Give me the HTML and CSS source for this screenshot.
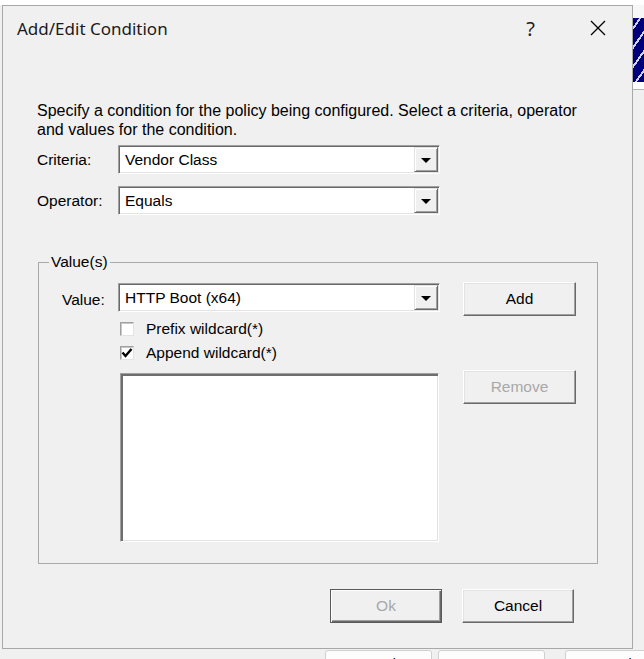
FILE: index.html
```html
<!DOCTYPE html>
<html lang="en">
<head>
<meta charset="utf-8">
<title>Add/Edit Condition</title>
<link rel="stylesheet" href="styles.css">
</head>
<body>
<div class="desktop">
  <div class="top-strip"></div>
  <div class="bg-side">
    <div class="bg-side-white"></div>
    <div class="bg-art"></div>
    <div class="bg-side-white2"></div>
    <div class="bg-side-line"></div>
  </div>
  <div class="bg-wizard">
    <span class="wiz-btn wiz-back">&lt; Back</span>
    <span class="wiz-btn wiz-next">Next &gt;</span>
    <span class="wiz-btn wiz-cancel">Cancel</span>
  </div>

  <div class="dialog">
    <div class="titlebar">
      <span class="title">Add/Edit Condition</span>
      <span class="tb-help">?</span>
      <span class="tb-close">
        <svg width="16" height="16" viewBox="0 0 16 16"><path d="M1 1 L15 15 M15 1 L1 15" stroke="#000" stroke-width="1.3" fill="none"/></svg>
      </span>
    </div>

    <div class="content">
      <p class="desc">Specify a condition for the policy being configured. Select a criteria, operator and values for the condition.</p>

      <div class="field-row first">
        <label class="lbl">Criteria:</label>
        <div class="combo"><span class="combo-text">Vendor Class</span><span class="combo-btn"><i class="arrow"></i></span></div>
      </div>
      <div class="field-row">
        <label class="lbl">Operator:</label>
        <div class="combo"><span class="combo-text">Equals</span><span class="combo-btn"><i class="arrow"></i></span></div>
      </div>

      <fieldset class="group">
        <legend class="group-legend">Value(s)</legend>
        <div class="group-grid">
          <label class="lbl-value">Value:</label>
          <div class="combo"><span class="combo-text">HTTP Boot (x64)</span><span class="combo-btn"><i class="arrow"></i></span></div>
          <button class="btn btn-add">Add</button>

          <div class="left-col">
            <div class="check-row">
              <span class="checkbox"></span>
              <span class="check-label">Prefix wildcard(*)</span>
            </div>
            <div class="check-row second">
              <span class="checkbox"><svg width="12" height="12" viewBox="0 0 12 12"><path d="M1.5 5.5 L4.5 9 L10.5 2" stroke="#000" stroke-width="2.4" fill="none"/></svg></span>
              <span class="check-label">Append wildcard(*)</span>
            </div>
            <div class="listbox"></div>
          </div>
          <div class="right-col">
            <button class="btn btn-remove disabled">Remove</button>
          </div>
        </div>
      </fieldset>

      <div class="footer">
        <button class="btn btn-foot btn-default disabled">Ok</button>
        <button class="btn btn-foot">Cancel</button>
      </div>
    </div>
  </div>
</div>
</body>
</html>
```
FILE: styles.css
```css
html, body {
  margin: 0;
  padding: 0;
}
body {
  background: #f0f0f0;
  font-family: "Liberation Sans", Arial, sans-serif;
  font-size: 15.5px;
  color: #000;
}
.desktop {
  position: relative;
  width: 644px;
  height: 659px;
  overflow: hidden;
  background: #f0f0f0;
}
.top-strip {
  height: 5px;
  background: #ffffff;
}

/* background window fragments */
.bg-side {
  position: absolute;
  left: 633px;
  top: 5px;
  width: 11px;
  display: flex;
  flex-direction: column;
}
.bg-side-white { height: 13px; background: #f7f7f7; }
.bg-art {
  height: 64px;
  background: repeating-linear-gradient(125deg, #00007a 0 5px, #d0d0ff 5px 7px, #00007a 7px 11px);
}
.bg-side-white2 { height: 7px; background: #ffffff; }
.bg-side-line { height: 1px; background: #b4b4b4; }

.bg-wizard {
  position: absolute;
  left: 325px;
  top: 650px;
  display: flex;
  gap: 6px;
}
.wiz-btn {
  box-sizing: border-box;
  height: 20px;
  width: 107px;
  padding-top: 5px;
  text-align: center;
  background: #fdfdfd;
  border: 1px solid #d0d0d0;
  border-radius: 3px 3px 0 0;
  font-family: "Noto Sans", sans-serif;
  font-size: 14px;
  line-height: 16px;
}
.wiz-cancel { margin-left: 14px; width: 90px; }

/* dialog */
.dialog {
  position: absolute;
  left: 2px;
  top: 5px;
  width: 631px;
  height: 644px;
  box-sizing: border-box;
  border: 1px solid #a8a8a8;
  background: #f0f0f0;
}
.titlebar {
  height: 44px;
  display: flex;
  align-items: center;
  padding-left: 14px;
}
.title {
  font-family: "Noto Sans", "Open Sans", sans-serif;
  font-size: 17px;
  color: #1a1a1a;
  flex: 1;
}
.tb-help {
  width: 67px;
  text-align: center;
  font-family: "Noto Sans", sans-serif;
  font-size: 20px;
  color: #222;
}
.tb-close {
  width: 68px;
  display: flex;
  justify-content: center;
  align-items: center;
}

.content {
  padding: 51px 0 0 34px;
}
.desc {
  margin: 0;
  width: 552px;
  font-size: 16px;
  line-height: 19px;
}
.field-row {
  display: flex;
  align-items: center;
  margin-top: 12px;
}
.field-row.first {
  margin-top: 6px;
}
.lbl {
  width: 81px;
}

.combo {
  box-sizing: border-box;
  width: 322px;
  height: 29px;
  background: #fff;
  border: 1px solid;
  border-color: #a0a0a0 #ffffff #ffffff #a0a0a0;
  box-shadow: inset 1px 1px 0 #696969, inset -1px -1px 0 #e3e3e3;
  display: flex;
  align-items: center;
  padding-left: 6px;
}
.combo-text {
  flex: 1;
}
.combo-btn {
  box-sizing: border-box;
  width: 24px;
  height: 25px;
  margin-right: 1px;
  background: #f0f0f0;
  border: 1px solid;
  border-color: #e3e3e3 #696969 #696969 #e3e3e3;
  box-shadow: inset 1px 1px 0 #ffffff, inset -1px -1px 0 #a0a0a0;
  display: flex;
  align-items: center;
  justify-content: center;
}
.arrow {
  width: 0;
  height: 0;
  border-left: 5px solid transparent;
  border-right: 5px solid transparent;
  border-top: 5px solid #000;
  margin-top: 1px;
}

/* group box */
.group {
  box-sizing: border-box;
  width: 560px;
  min-width: 0;
  margin: 38px 0 0 1px;
  padding: 12px 0 21px 10px;
  border: 1px solid #a9a9a9;
}
.group-legend {
  padding: 0 2px;
  line-height: 18px;
}
.group-grid {
  margin-left: 13px;
  display: grid;
  grid-template-columns: 56px 322px 23px 113px;
  align-items: start;
}
.lbl-value {
  grid-column: 1;
  align-self: center;
}
.group-grid > .combo {
  grid-column: 2;
}
.btn-add {
  grid-column: 4;
  margin-top: -1px;
  height: 33px;
}
.left-col {
  grid-column: 2;
  margin-left: 2px;
  padding-top: 6px;
}
.right-col {
  grid-column: 4;
  padding-top: 54px;
}
.check-row {
  display: flex;
  align-items: center;
  height: 14px;
  line-height: 14px;
}
.check-row.second {
  margin-top: 10px;
}
.checkbox {
  box-sizing: border-box;
  width: 14px;
  height: 14px;
  background: #fff;
  border: 1px solid;
  border-color: #a0a0a0 #e3e3e3 #e3e3e3 #a0a0a0;
  box-shadow: inset 1px 1px 0 #c8c8c8;
  margin-right: 12px;
  display: flex;
  align-items: center;
  justify-content: center;
}
.listbox {
  box-sizing: border-box;
  margin-top: 13px;
  width: 319px;
  height: 169px;
  background: #fff;
  border: 1px solid;
  border-color: #a0a0a0 #ffffff #ffffff #a0a0a0;
  box-shadow: inset 2px 2px 0 #6e6e6e, inset -1px -1px 0 #e3e3e3;
}

/* buttons */
.btn {
  box-sizing: border-box;
  width: 113px;
  height: 34px;
  padding: 0;
  font-family: "Liberation Sans", Arial, sans-serif;
  font-size: 15.5px;
  color: #000;
  background: #f0f0f0;
  border: 1px solid;
  border-color: #ffffff #696969 #696969 #ffffff;
  box-shadow: inset -1px -1px 0 #a0a0a0, inset 1px 1px 0 #e3e3e3;
  border-radius: 0;
}
.btn.disabled {
  color: #a8a8a8;
}
.footer {
  width: 537px;
  margin-top: 25px;
  display: flex;
  justify-content: flex-end;
  gap: 20px;
}
.btn-foot {
  width: 112px;
}
.btn-default {
  border: 1px solid #5a5a5a;
  box-shadow: inset 1px 1px 0 #ffffff, inset -1px -1px 0 #696969, inset -2px -2px 0 #a0a0a0;
}
```
